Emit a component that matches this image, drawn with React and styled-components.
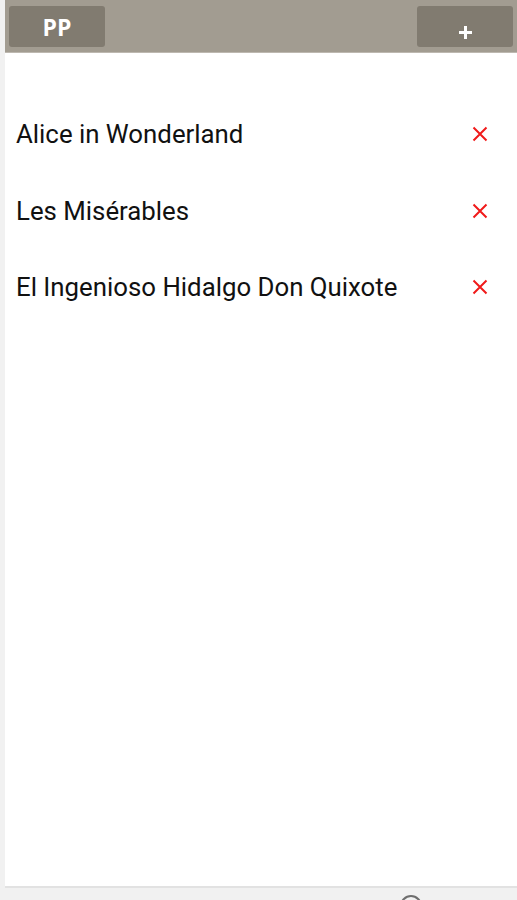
import React from "react";
import styled, { createGlobalStyle } from "styled-components";

const Global = createGlobalStyle`
  html, body { margin: 0; padding: 0; background: #f2f2f2; }
  body { font-family: Roboto, "Noto Sans", sans-serif; }
`;

const Screen = styled.div`
  width: 517px;
  height: 900px;
  display: flex;
  flex-direction: column;
  background: #f1f1f1;
  overflow: hidden;
`;

const Main = styled.div`
  flex: 1;
  margin-left: 5px;
  display: flex;
  flex-direction: column;
  background: #ffffff;
  border-bottom: 2px solid #e2e2e2;
`;

const Header = styled.header`
  height: 53px;
  box-sizing: border-box;
  background: #a29c91;
  border-bottom: 1px solid #bdb8b0;
  display: flex;
  align-items: center;
  justify-content: space-between;
  padding: 0 4px 0 4px;
`;

const HeaderButton = styled.button`
  width: 96px;
  height: 41px;
  border: none;
  border-radius: 3px;
  background: #817b70;
  color: #ffffff;
  font-family: "Open Sans", Roboto, sans-serif;
  font-weight: 700;
  font-size: 23px;
  padding: ${(p) => p.$pt || 0}px 0 0 0;
  display: flex;
  align-items: center;
  justify-content: center;
  margin-top: 1px;
`;

const List = styled.ul`
  list-style: none;
  margin: 0;
  padding: 43px 0 0 0;
`;

const Row = styled.li`
  height: 76.5px;
  display: flex;
  align-items: center;
  justify-content: space-between;
  padding: 0 29px 0 11px;
`;

const Title = styled.span`
  font-family: Roboto, sans-serif;
  font-size: 25.8px;
  color: #111;
  line-height: 30px;
`;

const Remove = styled.button`
  border: none;
  background: none;
  padding: 0;
  width: 16px;
  height: 16px;
  display: flex;
  align-items: center;
  justify-content: center;
`;

const Footer = styled.div`
  height: 12px;
  position: relative;
  background: #f1f1f1;
`;

const Circle = styled.div`
  position: absolute;
  left: 400px;
  top: 7px;
  width: 18px;
  height: 18px;
  border: 2px solid #6e6e6e;
  border-radius: 50%;
`;

const books = [
  "Alice in Wonderland",
  "Les Misérables",
  "El Ingenioso Hidalgo Don Quixote",
];

const XIcon = () => (
  <svg width="16" height="16" viewBox="0 0 16 16">
    <path d="M1.5 1.5 L14.5 14.5 M14.5 1.5 L1.5 14.5" stroke="#f01a1a" strokeWidth="2" />
  </svg>
);

const PlusIcon = () => (
  <svg width="15" height="15" viewBox="0 0 15 15">
    <path d="M7.5 1 V14 M1 7.5 H14" stroke="#ffffff" strokeWidth="3" />
  </svg>
);

export default function App() {
  return (
    <>
      <Global />
      <Screen>
        <Main>
          <Header>
            <HeaderButton>PP</HeaderButton>
            <HeaderButton $pt={11} aria-label="add">
              <PlusIcon />
            </HeaderButton>
          </Header>
          <List>
            {books.map((b) => (
              <Row key={b}>
                <Title>{b}</Title>
                <Remove aria-label="remove">
                  <XIcon />
                </Remove>
              </Row>
            ))}
          </List>
        </Main>
        <Footer>
          <Circle />
        </Footer>
      </Screen>
    </>
  );
}
